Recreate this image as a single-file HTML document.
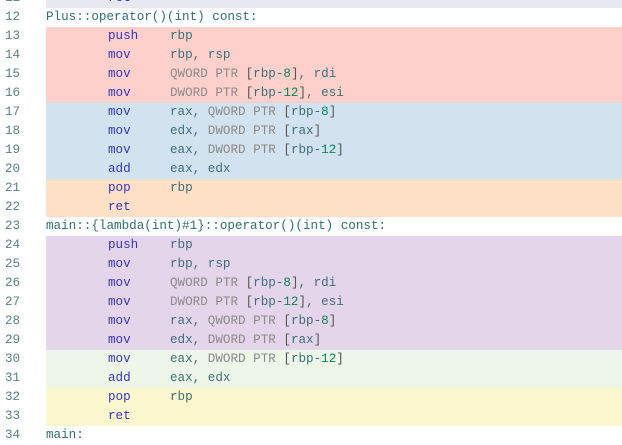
<!DOCTYPE html>
<html><head><meta charset="utf-8"><style>
html,body{margin:0;padding:0;width:622px;height:432px;overflow:hidden;background:#fff;}
.r{position:absolute;left:0;width:622px;height:19px;font-family:"Liberation Mono",monospace;font-size:12.6px;line-height:19px;white-space:pre;}
.bg{position:absolute;left:46px;right:0;top:0;bottom:0;}
.n{position:absolute;left:5px;color:#5a7f8a;}
.t{position:absolute;left:46px;}
.l{color:#2f6f72;}
.k{color:#3434c8;}
.o{color:#3c6f79;}
.p{color:#8a8a8a;}
.d{color:#098658;}
.b{color:#555;}
</style></head><body>
<div id="c"></div>
<script>
var rows=[
[11,'#e8e8f3','ins','ret',''],
[12,null,'lab','Plus::operator()(int) const:'],
[13,'#fdd0cc','ins','push','<span class=o>rbp</span>'],
[14,'#fdd0cc','ins','mov','<span class=o>rbp, rsp</span>'],
[15,'#fdd0cc','ins','mov','<span class=p>QWORD PTR </span><span class=b>[</span><span class=o>rbp-</span><span class=d>8</span><span class=b>]</span><span class=o>, rdi</span>'],
[16,'#fdd0cc','ins','mov','<span class=p>DWORD PTR </span><span class=b>[</span><span class=o>rbp-</span><span class=d>12</span><span class=b>]</span><span class=o>, esi</span>'],
[17,'#d2e3ef','ins','mov','<span class=o>rax, </span><span class=p>QWORD PTR </span><span class=b>[</span><span class=o>rbp-</span><span class=d>8</span><span class=b>]</span>'],
[18,'#d2e3ef','ins','mov','<span class=o>edx, </span><span class=p>DWORD PTR </span><span class=b>[</span><span class=o>rax</span><span class=b>]</span>'],
[19,'#d2e3ef','ins','mov','<span class=o>eax, </span><span class=p>DWORD PTR </span><span class=b>[</span><span class=o>rbp-</span><span class=d>12</span><span class=b>]</span>'],
[20,'#d2e3ef','ins','add','<span class=o>eax, edx</span>'],
[21,'#fde0c6','ins','pop','<span class=o>rbp</span>'],
[22,'#fde0c6','ins','ret',''],
[23,null,'lab','main::{lambda(int)#1}::operator()(int) const:'],
[24,'#e5d5ea','ins','push','<span class=o>rbp</span>'],
[25,'#e5d5ea','ins','mov','<span class=o>rbp, rsp</span>'],
[26,'#e5d5ea','ins','mov','<span class=p>QWORD PTR </span><span class=b>[</span><span class=o>rbp-</span><span class=d>8</span><span class=b>]</span><span class=o>, rdi</span>'],
[27,'#e5d5ea','ins','mov','<span class=p>DWORD PTR </span><span class=b>[</span><span class=o>rbp-</span><span class=d>12</span><span class=b>]</span><span class=o>, esi</span>'],
[28,'#e5d5ea','ins','mov','<span class=o>rax, </span><span class=p>QWORD PTR </span><span class=b>[</span><span class=o>rbp-</span><span class=d>8</span><span class=b>]</span>'],
[29,'#e5d5ea','ins','mov','<span class=o>edx, </span><span class=p>DWORD PTR </span><span class=b>[</span><span class=o>rax</span><span class=b>]</span>'],
[30,'#eef6e9','ins','mov','<span class=o>eax, </span><span class=p>DWORD PTR </span><span class=b>[</span><span class=o>rbp-</span><span class=d>12</span><span class=b>]</span>'],
[31,'#eef6e9','ins','add','<span class=o>eax, edx</span>'],
[32,'#fdf7cf','ins','pop','<span class=o>rbp</span>'],
[33,'#fdf7cf','ins','ret',''],
[34,null,'lab','main:']
];
var h='';
rows.forEach(function(r){
 var top=8+(r[0]-12)*19;
 h+='<div class="r" style="top:'+top+'px">';
 if(r[1])h+='<div class="bg" style="background:'+r[1]+'"></div>';
 h+='<span class="n">'+r[0]+'</span>';
 if(r[2]=='lab')h+='<span class="t l">'+r[3]+'</span>';
 else h+='<span class="t k" style="left:108px">'+r[3]+'</span><span class="t" style="left:170px">'+r[4]+'</span>';
 h+='</div>';
});
document.getElementById('c').innerHTML=h;
</script>
</body></html>
